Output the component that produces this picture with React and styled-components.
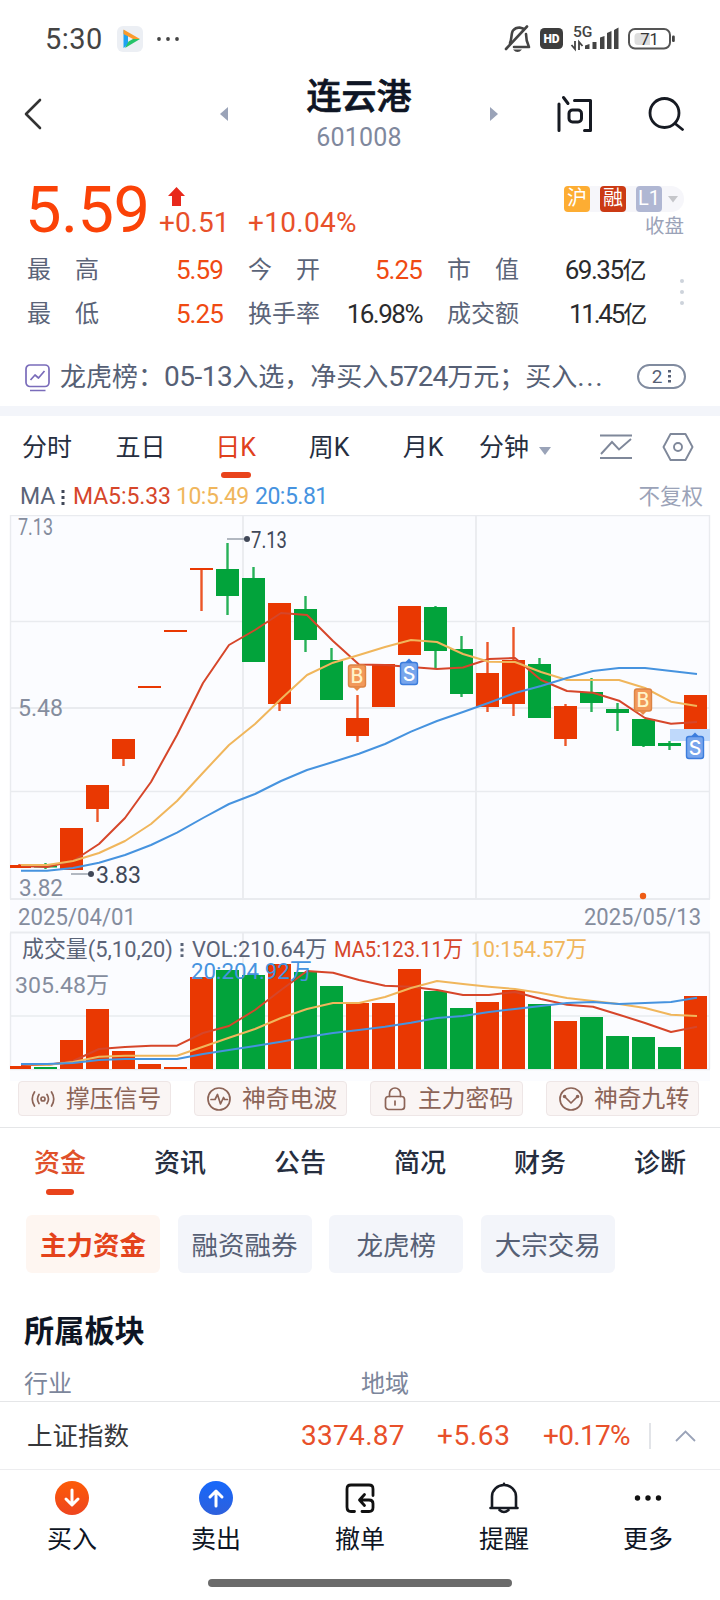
import styled, { createGlobalStyle, css } from 'styled-components'

const GlobalStyle = createGlobalStyle`
    body {
        margin: 0;
        background-color: #fff;
    }
    * {
        box-sizing: border-box;
    }
`

const RED = '#e93802'
const GREEN = '#02a33b'
const MA5 = '#d6462a'
const MA10 = '#f0b65c'
const MA20 = '#4693df'
const FONT = "Roboto, 'Noto Sans CJK SC', sans-serif"

const Page = styled.div`
    width: 720px;
    height: 1600px;
    overflow: hidden;
    display: flex;
    flex-direction: column;
    font-family: ${FONT};
    color: #262e3f;
    white-space: nowrap;
`

const Num = styled.span`
    font-size: ${(props) => props.$size || 28}px;
    letter-spacing: ${(props) => props.$gap || 0}px;
    color: ${(props) => props.$color || 'inherit'};
`

/* status bar */
const StatusBar = styled.header`
    height: 76px;
    padding: 2px 44px 0 45px;
    display: flex;
    align-items: center;
    justify-content: space-between;
    color: #444;
`

const StatusLeft = styled.div`
    display: flex;
    align-items: center;
    gap: 13px;
`

/* title bar */
const TitleBar = styled.div`
    height: 76px;
    margin-bottom: 16px;
    padding: 0 35px 0 24px;
    display: grid;
    grid-template-columns: 196px 8px 1fr 8px 59px 34px 57px 37px;
    grid-template-rows: 76px;
    align-items: center;
`

const StockName = styled.div`
    grid-column: 3;
    display: flex;
    flex-direction: column;
    align-items: center;
`

const Name = styled.h1`
    margin: 0 0 3px;
    font-size: 35px;
    line-height: 45px;
    font-weight: 500;
    -webkit-text-stroke: 0.7px #0e1524;
    color: #0e1524;
`

const Code = styled.span`
    font-size: 25px;
    line-height: 30px;
    letter-spacing: 0.2px;
    color: #7f889d;
`

/* quote */
const Quote = styled.section`
    height: 178px;
    padding: 12px 26px 0 27px;
`

const PriceRow = styled.div`
    height: 66px;
    display: flex;
    align-items: flex-end;
`

const Price = styled.div`
    width: 134px;
    margin-left: -2px;
    padding-bottom: 3px;
    font-size: 65px;
    line-height: 66px;
    letter-spacing: -0.6px;
    color: #fb4207;
`

const Change = styled.div`
    width: ${(props) => props.$w || 89}px;
    display: flex;
    flex-direction: column;
    padding-bottom: 7px;
    svg {
        margin: 0 0 0 9px;
    }
`

const Tags = styled.div`
    margin-left: auto;
    width: 130px;
    height: 66px;
    padding: 6px 10px 0 0;
    display: flex;
    flex-direction: column;
    align-items: flex-end;
`

const TagRow = styled.div`
    width: 120px;
    height: 26px;
    flex: none;
    display: flex;
    align-items: center;
    gap: 10px;
    border-radius: 5px 13px 13px 5px;
    background-color: #f6f6fa;
    svg {
        margin-left: -4px;
    }
`

const Tag = styled.span`
    width: 26px;
    height: 26px;
    border-radius: 4px;
    background-color: ${(props) => props.$bg};
    color: #fff;
    font-size: 20px;
    line-height: 25px;
    text-align: center;
`

const Closed = styled.span`
    font-size: 19.5px;
    line-height: 29px;
    color: #9ba3b8;
`

const Stats = styled.div`
    display: grid;
    grid-template-columns: 196px 25px 174px 25px 198px 1fr;
    grid-template-rows: 44px 44px;
    align-items: center;
    margin-top: 2px;
`

const Stat = styled.div`
    grid-column: ${(props) => props.$col};
    display: flex;
    justify-content: space-between;
    align-items: center;
    font-size: 24px;
    line-height: 44px;
    color: #5b6478;
`

const StatValue = styled.span`
    font-size: 26px;
    letter-spacing: ${(props) => props.$gap || -0.9}px;
    color: ${(props) => (props.$up ? '#f04a12' : '#2b2b2d')};
    small {
        font-size: 24px;
    }
`

const MoreStats = styled.div`
    grid-column: 6;
    grid-row: 1 / 3;
    justify-self: end;
    padding-right: 10px;
    display: flex;
    flex-direction: column;
    gap: 7px;
    i {
        width: 4px;
        height: 4px;
        border-radius: 50%;
        background-color: #cdd3db;
    }
`

/* notice line */
const Notice = styled.div`
    height: 60px;
    padding: 0 34px 0 25px;
    display: flex;
    align-items: center;
    color: #566075;
    font-size: 26px;
    svg {
        flex: none;
    }
`

const NoticeText = styled.div`
    margin-left: 10px;
    width: 577px;
    height: 38px;
    line-height: 40px;
`

const NoticeCount = styled.div`
    width: 49px;
    height: 25px;
    border: 2px solid #808b9f;
    border-radius: 13px;
    display: flex;
    align-items: center;
    justify-content: center;
    gap: 6px;
    font-size: 19px;
`

const Band = styled.div`
    height: 10px;
    background-color: #f3f5fa;
`

/* period tabs */
const Periods = styled.nav`
    height: 66px;
    display: grid;
    grid-template-columns: 94px 93px 97px 90px 98px 114px 60px 64px;
    align-items: start;
    font-size: 25px;
    line-height: 64px;
    color: #262e3f;
    svg {
        justify-self: center;
    }
`

const Period = styled.div`
    height: 66px;
    display: flex;
    flex-direction: column;
    align-items: center;
    ${(props) =>
        props.$active &&
        css`
            color: #e0411c;
            &::after {
                content: '';
                width: 30px;
                height: 6px;
                margin-top: -8px;
                border-radius: 3px;
                background-color: #e9431b;
            }
        `}
`

const Minutes = styled.div`
    display: flex;
    align-items: center;
    gap: 10px;
    padding-left: 7px;
    svg {
        margin-top: 5px;
    }
`

const Averages = styled.div`
    height: 26px;
    padding: 4px 17px 0 20px;
    display: flex;
    align-items: center;
    font-size: 23px;
    line-height: 22px;
    color: #5b6478;
`

const Average = styled.span`
    width: ${(props) => props.$w}px;
    color: ${(props) => props.$color};
    letter-spacing: ${(props) => props.$gap || 0}px;
`

const NoAdjust = styled.span`
    margin-left: auto;
    font-size: 21.5px;
    color: #9ba3b8;
`

const Chart = styled.svg`
    display: block;
    flex: none;
    font-family: ${FONT};
`

/* signal buttons */
const Signals = styled.div`
    height: 47px;
    padding: 0 21px 0 18px;
    display: flex;
    justify-content: space-between;
    border-bottom: 1px solid #e5e6e8;
`

const Signal = styled.button`
    width: 153px;
    height: 35px;
    padding: 0 0 0 12px;
    border: 1px solid #eee6e6;
    border-radius: 4px;
    background-color: #faf5f4;
    color: #8c6457;
    display: flex;
    align-items: center;
    gap: 11px;
    font-family: ${FONT};
    font-size: 23.8px;
    line-height: 30px;
`

/* info tabs */
const InfoTabs = styled.nav`
    height: 87px;
    display: grid;
    grid-template-columns: repeat(6, 120px);
    font-size: 26px;
    font-weight: 500;
    line-height: 70px;
`

const InfoTab = styled.div`
    display: flex;
    flex-direction: column;
    align-items: center;
    ${(props) =>
        props.$active &&
        css`
            color: #e0502a;
            &::after {
                content: '';
                width: 28px;
                height: 6px;
                margin-top: -9px;
                border-radius: 3px;
                background-color: #e9431b;
            }
        `}
`

const Chips = styled.div`
    display: flex;
    gap: 17.6px;
    padding-left: 26px;
`

const Chip = styled.div`
    width: 134px;
    height: 58px;
    border-radius: 6px;
    background-color: ${(props) => (props.$active ? '#fef6f1' : '#f3f5fa')};
    color: ${(props) => (props.$active ? '#e4431b' : '#566075')};
    font-size: 26.5px;
    font-weight: ${(props) => (props.$active ? 700 : 400)};
    line-height: 62px;
    text-align: center;
`

const SectorTitle = styled.h2`
    margin: 37px 0 0 24px;
    font-size: 30.2px;
    line-height: 44px;
    height: 44px;
    font-weight: 700;
    color: #0e1524;
`

const SectorHeads = styled.div`
    height: 48px;
    padding: 10px 24px 0;
    display: grid;
    grid-template-columns: 337px 1fr;
    font-size: 24px;
    line-height: 40px;
    color: #7c869b;
    border-bottom: 1px solid #e5e6e8;
`

const IndexRow = styled.div`
    height: 68px;
    padding: 0 24px 0 27px;
    display: grid;
    grid-template-columns: 274px 136px 106px 106px 26px 1fr;
    align-items: center;
    font-size: 25.5px;
    line-height: 64px;
    color: #36373a;
    border-bottom: 1px solid #ededef;
`

const Split = styled.i`
    width: 2px;
    height: 26px;
    background-color: #e2e4e8;
`

const BottomBar = styled.nav`
    height: 109px;
    display: grid;
    grid-template-columns: repeat(5, 1fr);
`

const Action = styled.div`
    display: flex;
    flex-direction: column;
    align-items: center;
    padding-top: 11px;
    font-size: 25px;
    line-height: 50px;
    color: #0e1524;
`

const HomeBar = styled.div`
    width: 304px;
    height: 8px;
    border-radius: 4px;
    margin: 0 auto;
    background-color: #6b6b6b;
`

/* x of the candle in slot i; slots are 26px apart */
const slot = (i) => 8 + i * 26

/* [up, high, bodyTop, bodyBottom, low] */
const candles = [
    [1, 864, 865, 868, 868],
    [0, 863, 865.5, 867.5, 869],
    [1, 828, 828, 870, 870],
    [1, 785, 785, 809, 822],
    [1, 739, 739, 759, 766],
    [1, 686, 686, 688, 688],
    [1, 630, 630, 632, 632],
    [1, 568, 568, 570, 611],
    [0, 543, 569, 596, 615],
    [0, 567, 578, 662, 662],
    [1, 603, 603, 704, 711],
    [0, 596, 609, 640, 652],
    [0, 648, 660, 700, 700],
    [1, 695, 718, 736, 742],
    [1, 664, 664, 707, 707],
    [1, 606, 606, 655, 655],
    [0, 606, 607, 651, 668],
    [0, 636, 649, 694, 697],
    [1, 642, 673, 707, 712],
    [1, 627, 660, 704, 716],
    [0, 658, 664, 718, 718],
    [1, 704, 706, 739, 746],
    [0, 678, 692, 703, 712],
    [0, 703, 709, 713, 731],
    [0, 719, 719, 746, 747],
    [0, 741, 743, 746, 750],
    [1, 695, 695, 729, 729],
]

const volumes = [1066, 1067, 1040, 1009, 1051, 1064, 1067, 977, 970, 975, 964, 972, 986, 1003, 1003, 969, 991, 1008, 1002, 990, 1004, 1021, 1017, 1036, 1037, 1047, 996]

const priceLines = [
    [MA5, [866, 867, 861, 844, 818, 782, 735, 683, 645, 630, 613, 615, 641, 664.5, 665, 667, 669, 667.5, 659, 658, 680, 691, 692.7, 700.7, 718, 723.7, 722]],
    [MA10, [865, 865, 861, 853, 841, 824, 801, 772.7, 745, 724, 699, 675, 662.7, 655, 647, 640, 642, 654, 661.7, 662, 672, 680, 680, 680, 688, 701.7, 706]],
    [MA20, [870.7, 870.7, 868, 862.7, 855, 845, 832.7, 818, 804, 794, 781, 770, 762, 753.7, 744, 731.7, 721, 712, 702.7, 693, 686, 678, 671, 668, 668, 671, 674]],
]

const volumeLines = [
    [MA5, [1065, 1065, 1061, 1049, 1047, 1045.7, 1045.7, 1033, 1026, 1010, 990, 971, 972.7, 980, 985.7, 986.7, 990, 995, 995, 992, 999, 1004.7, 1006.7, 1014.7, 1023, 1032, 1026.7]],
    [MA10, [1064, 1065, 1062, 1056.7, 1055.7, 1055.7, 1055.7, 1046.7, 1037.7, 1029, 1018, 1009, 1003, 1003, 997, 988, 981, 984, 986.7, 989, 993, 998, 1001, 1004, 1008, 1014.7, 1016]],
    [MA20, [1064, 1064, 1063, 1060, 1059, 1059, 1059, 1054, 1050, 1046, 1041.7, 1037, 1033, 1030, 1026.7, 1022.7, 1018, 1016, 1012, 1009, 1006, 1003, 1002, 1004, 1003, 1002, 997.7]],
]

function Candle({ i, data }) {
    const [up, high, top, bottom, low] = data
    const color = up ? RED : GREEN
    const x = i === 0 ? 10 : slot(i)
    return (
        <g fill={color}>
            <rect x={slot(i) + 10.3} y={high} width="2.4" height={low - high} opacity="0.85" />
            <rect x={x} y={top} width={slot(i) + 23 - x} height={bottom - top} />
        </g>
    )
}

function Line({ color, ys }) {
    return <polyline points={ys.map((y, i) => `${21 + i * 26},${y}`).join(' ')} fill="none" stroke={color} strokeWidth="2" strokeLinejoin="round" />
}

function Label({ x, y, w, size = 23, color = '#858d9e', children }) {
    return <text x={x} y={y} fontSize={size} fill={color} textLength={w} lengthAdjust="spacingAndGlyphs">{children}</text>
}

/* B badge points down at the candle, S badge points up */
function Badge({ x, y, kind }) {
    const buy = kind === 'B'
    return (
        <g>
            <rect x={x - 8.5} y={y - 11} width="17" height="22" rx="2.5" fill={buy ? '#f2995a' : '#77a5ec'} stroke={buy ? '#dc8444' : '#3c7ddd'} strokeWidth="1.4" />
            <path d={buy ? `M${x - 4} ${y + 11}h8l-4 4z` : `M${x - 4} ${y - 11}h8l-4 -4z`} fill={buy ? '#e98b48' : '#3c7ddd'} />
            <text x={x} y={y + 7} fontSize="19.5" fontWeight="500" textAnchor="middle" fontFamily="Inter, sans-serif" fill={buy ? '#fff3c9' : '#fff'}>{kind}</text>
        </g>
    )
}

function StockChart() {
    return (
        <Chart width="720" height="573" viewBox="0 508 720 573">
            <rect x="10" y="515" width="700" height="566" fill="#fbfcff" />
            <g stroke="#e9ebef" strokeWidth="1.4" fill="none">
                <path d="M10 515.6H710M10 621.5H710M10 791.5H710M10 1016H710M10 1069.5H710" />
                <path d="M10 708H710M10 899H710M10 932.6H710" strokeWidth="2" />
                <path d="M10.5 515V899M709.5 515V899M10.5 933V1069M709.5 933V1069" />
                <path d="M243 515V899M476 515V899M243 933V1069M476 933V1069" strokeWidth="1.8" />
            </g>
            <rect x="670" y="729" width="40" height="12" fill="#bfd9fb" />
            {candles.map((c, i) => <Candle key={i} i={i} data={c} />)}
            {priceLines.map(([color, ys]) => <Line key={color} color={color} ys={ys} />)}
            <Badge x={357} y={676} kind="B" />
            <Badge x={409} y={673.5} kind="S" />
            <Badge x={643} y={700} kind="B" />
            <Badge x={695} y={747.5} kind="S" />

            <Label x={18} y={534.5} w={35}>7.13</Label>
            <Label x={18} y={716} w={45}>5.48</Label>
            <Label x={19} y={896} w={44}>3.82</Label>
            <path d="M227 539H246M71 874H90" stroke="#9ba1ad" strokeWidth="1.6" />
            <circle cx="247" cy="539" r="3" fill="#414858" />
            <circle cx="91" cy="874" r="3" fill="#414858" />
            <Label x={251} y={548} w={36} color="#414858">7.13</Label>
            <Label x={96} y={883} w={45} color="#414858">3.83</Label>
            <circle cx="643" cy="896" r="3.2" fill="#ee5c15" />
            <Label x={18} y={925} w={118}>2025/04/01</Label>
            <Label x={584} y={925} w={117}>2025/05/13</Label>

            {volumes.map((top, i) => {
                const x = i === 0 ? 10 : slot(i)
                return <rect key={i} x={x} y={top} width={slot(i) + 23 - x} height={1069 - top} fill={candles[i][0] ? RED : GREEN} />
            })}
            {volumeLines.map(([color, ys]) => <Line key={color} color={color} ys={ys} />)}
            <Label x={22} y={957} w={151} size={22.5} color="#5b6478">成交量(5,10,20)</Label>
            <path d="M182 943V957" stroke="#5b6478" strokeWidth="3" strokeDasharray="3 2.6" />
            <Label x={192} y={957} w={135} size={22.5} color="#5b6478">VOL:210.64万</Label>
            <Label x={334} y={957} w={129} size={22.5} color={MA5}>MA5:123.11万</Label>
            <Label x={471} y={957} w={116} size={22.5} color={MA10}>10:154.57万</Label>
            <Label x={191} y={979} w={121} size={22.5} color={MA20}>20:204.92万</Label>
            <Label x={15} y={993} w={94} size={22.5}>305.48万</Label>
        </Chart>
    )
}

function StatusIcons() {
    return (
        <svg width="172" height="30" viewBox="504 24 172 30">
            <g fill="none" stroke="#444" strokeWidth="2.6" strokeLinecap="round" strokeLinejoin="round">
                <path d="M510 43C512 39 511 33 513 30.500C515 28 517 27.500 519.500 27.500L523 28.500M526 34C526 40 527 43 529 47H514" />
                <path d="M506 49L527 26.500" />
            </g>
            <path d="M513 49.500h9q-4.500 5 -9 0z" fill="#444" />
            <rect x="540" y="28" width="23" height="21" rx="4.500" fill="#3d3d3d" />
            <text x="551.500" y="43" fontSize="12" fontWeight="900" textAnchor="middle" fill="#fff" fontFamily={FONT}>HD</text>
            <text x="573" y="37" fontSize="14" fontWeight="500" fill="#444" textLength="19.500" lengthAdjust="spacingAndGlyphs" fontFamily={FONT}>5G</text>
            <path d="M575 41v8l-3.500 -4M579 50v-8l3.500 4" fill="none" stroke="#444" strokeWidth="1.800" />
            <path d="M585 49v-3.500l4.500 -1.500v5zM592.500 49v-7h4v7zM600 49V37.500l4.500 -1.500V49zM607 49V33l4.500 -2V49zM614 49V30l4.500 -2.500V49z" fill="#444" />
            <rect x="629" y="29" width="41" height="19.500" rx="6" fill="#fff" stroke="#555" strokeWidth="2" />
            <path d="M638 33h12v12h-12q-3.500 0 -3.500 -3.500v-5q0 -3.500 3.500 -3.500z" fill="#dedede" />
            <text x="649.500" y="44.500" fontSize="16.500" textAnchor="middle" fill="#333" fontFamily={FONT}>71</text>
            <rect x="672" y="35.500" width="2.800" height="6.500" rx="1.200" fill="#444" />
        </svg>
    )
}

const signals = [
    ['撑压信号', <><circle cx="12" cy="12" r="2" /><path d="M8 7.500q-3 4.500 0 9M16 7.500q3 4.500 0 9M3.500 5q-4.500 7 0 14M20.500 5q4.500 7 0 14" /></>],
    ['神奇电波', <><circle cx="12" cy="12" r="11" /><path d="M4 12.500h4l2.500 -5 3 9.500 3 -6.500 1 2h3" /></>],
    ['主力密码', <><rect x="2.500" y="9.500" width="19" height="13" rx="3" /><path d="M6.500 9.500V6.500a5.500 5.500 0 0 1 11 0v3M12 14v4" /></>],
    ['神奇九转', <><circle cx="12" cy="12" r="11" /><path d="M5.500 9.500l6.500 6.500 6.500 -6.500" /><path d="M5.500 9.500h.1M18.500 9.500h.1" strokeWidth="3.500" /></>],
]

const actions = [
    ['买入', <><defs><linearGradient id="buy" x1="0" y1="0" x2="0" y2="1"><stop offset="0" stopColor="#fd5b06" /><stop offset="1" stopColor="#ee451f" /></linearGradient></defs><circle cx="17" cy="17" r="17" fill="url(#buy)" /><path d="M17 9v14.500M11 18l6 6 6 -6" stroke="#fff" /></>],
    ['卖出', <><defs><linearGradient id="sell" x1="0" y1="0" x2="0" y2="1"><stop offset="0" stopColor="#1668fb" /><stop offset="1" stopColor="#2e60dc" /></linearGradient></defs><circle cx="17" cy="17" r="17" fill="url(#sell)" /><path d="M17 25V10.500M11 16l6 -6 6 6" stroke="#fff" /></>],
    ['撤单', <path d="M30 14.500V8q0 -4 -4 -4H8q-4 0 -4 4v18q0 4.500 4 4.500h3.500M19 30.500h7q4 0 4 -4v-4q0 -3.500 -4 -3.500H17M21.500 13.500L16.500 19l5 5.500" stroke="#111" strokeWidth="2.800" />],
    ['提醒', <><path d="M17 2.800v1M5 27V15.500a12 11.500 0 0 1 24 0V27M3.500 27h27" stroke="#161a22" strokeWidth="2.600" /><path d="M12.500 29q4.500 4 9 0" stroke="#161a22" strokeWidth="2.600" /></>],
    ['更多', <><circle cx="6.500" cy="17" r="2.700" fill="#111" /><circle cx="17" cy="17" r="2.700" fill="#111" /><circle cx="27.500" cy="17" r="2.700" fill="#111" /></>],
]

function App() {
    return (
        <Page>
            <GlobalStyle />
            <StatusBar>
                <StatusLeft>
                    <Num $size={29} $gap={0.5}>5:30</Num>
                    <svg width="64" height="28" viewBox="0 0 64 28">
                        <rect x="1" y="1" width="26" height="26" rx="6" fill="#eceff4" />
                        <path d="M7.500 5v18l4.500 -3V9z" fill="#1fa3f2" />
                        <path d="M7.500 4.500l16.500 9.500h-7L7.500 9z" fill="#fb9a2c" />
                        <path d="M24 14L9 23l3.500 -6.500L17 14z" fill="#25c46a" />
                        <circle cx="43" cy="14" r="1.900" fill="#444" />
                        <circle cx="52" cy="14" r="1.900" fill="#444" />
                        <circle cx="61" cy="14" r="1.900" fill="#444" />
                    </svg>
                </StatusLeft>
                <StatusIcons />
            </StatusBar>

            <TitleBar>
                <svg width="18" height="32" viewBox="0 0 18 32">
                    <path d="M16 2L2 16l14 14" fill="none" stroke="#333" strokeWidth="2.600" strokeLinecap="round" strokeLinejoin="round" />
                </svg>
                <svg width="8" height="14"><path d="M8 0v14L0 7z" fill="#9aa3b8" /></svg>
                <StockName>
                    <Name>连云港</Name>
                    <Code>601008</Code>
                </StockName>
                <svg width="8" height="14"><path d="M0 0v14l8 -7z" fill="#9aa3b8" /></svg>
                <span />
                <svg width="36" height="38" viewBox="0 0 36 38">
                    <path d="M2 9v26.500M6.500 2.500L11 8.500M17.500 5.500H33.500V35.500H27.500" fill="none" stroke="#161a22" strokeWidth="3" strokeLinecap="round" strokeLinejoin="round" />
                    <rect x="12" y="15" width="12.500" height="12" rx="3.500" fill="none" stroke="#161a22" strokeWidth="3" />
                </svg>
                <span />
                <svg width="37" height="34" viewBox="0 0 37 34">
                    <circle cx="16.500" cy="16" r="14.500" fill="none" stroke="#161a22" strokeWidth="2.800" />
                    <path d="M27 26.500l7.500 6" stroke="#161a22" strokeWidth="2.800" strokeLinecap="round" />
                </svg>
            </TitleBar>

            <Quote>
                <PriceRow>
                    <Price>5.59</Price>
                    <Change>
                        <svg width="17" height="19" viewBox="0 0 17 19"><path d="M8.500 0L17 9h-4v10H4V9H0z" fill="#e8291c" /></svg>
                        <Num $color="#e8502a">+0.51</Num>
                    </Change>
                    <Change $w={120}>
                        <Num $color="#e8502a" $gap={0.3}>+10.04%</Num>
                    </Change>
                    <Tags>
                        <TagRow>
                            <Tag $bg="#fdad33">沪</Tag>
                            <Tag $bg="#cb3a14">融</Tag>
                            <Tag $bg="#b0b7d3">L1</Tag>
                            <svg width="10" height="7"><path d="M0 0h10L5 6.500z" fill="#c5c6ca" /></svg>
                        </TagRow>
                        <Closed>收盘</Closed>
                    </Tags>
                </PriceRow>
                <Stats>
                    <Stat $col={1}>最　高<StatValue $up>5.59</StatValue></Stat>
                    <Stat $col={3}>今　开<StatValue $up>5.25</StatValue></Stat>
                    <Stat $col={5}>市　值<StatValue $gap={-1.5}>69.35<small>亿</small></StatValue></Stat>
                    <Stat $col={1}>最　低<StatValue $up>5.25</StatValue></Stat>
                    <Stat $col={3}>换手率<StatValue $gap={-1.5}>16.98%</StatValue></Stat>
                    <Stat $col={5}>成交额<StatValue $gap={-2.2}>11.45<small>亿</small></StatValue></Stat>
                    <MoreStats><i /><i /><i /></MoreStats>
                </Stats>
            </Quote>

            <Notice>
                <svg width="25" height="31" viewBox="0 -3 25 31">
                    <g fill="none" stroke="#7a6cba" strokeWidth="1.700" strokeLinejoin="round">
                        <rect x="1" y="1" width="23" height="21.500" rx="4" />
                        <path d="M5.500 16l4.500 -5 3.500 3 6 -7M5 26.500h15.500" />
                    </g>
                </svg>
                <NoticeText>龙虎榜：<Num $size={28} $gap={-0.5}>05-13</Num>入选，净买入<Num $size={28} $gap={-1}>5724</Num>万元；买入<Num $size={28} $gap={1.6}>...</Num></NoticeText>
                <NoticeCount>
                    2
                    <svg width="3" height="13"><path d="M1.500 0V13" stroke="#566075" strokeWidth="3" strokeDasharray="2.600 2.400" /></svg>
                </NoticeCount>
            </Notice>
            <Band />

            <Periods>
                <Period>分时</Period>
                <Period>五日</Period>
                <Period $active>日K</Period>
                <Period>周K</Period>
                <Period>月K</Period>
                <Minutes>
                    分钟
                    <svg width="12" height="8"><path d="M0 0h12L6 8z" fill="#9aa3b8" /></svg>
                </Minutes>
                <svg width="32" height="64" viewBox="0 0 32 64">
                    <path d="M0 19.500h32M0 42h32M1 38l11 -12 7 7.500L31 23" fill="none" stroke="#7f889a" strokeWidth="1.900" />
                </svg>
                <svg width="32" height="64" viewBox="0 0 32 64">
                    <path d="M8.500 18h15l7 13 -7 13h-15l-7 -13z" fill="none" stroke="#7f889a" strokeWidth="1.900" strokeLinejoin="round" />
                    <circle cx="16" cy="31" r="4" fill="none" stroke="#7f889a" strokeWidth="1.900" />
                </svg>
            </Periods>
            <Averages>
                <Average $w={41}>MA</Average>
                <svg width="12" height="15"><path d="M2 0V15" stroke="#414858" strokeWidth="3" strokeDasharray="3 3" /></svg>
                <Average $w={103} $color={MA5} $gap={-0.1}>MA5:5.33</Average>
                <Average $w={79} $color={MA10} $gap={-0.5}>10:5.49</Average>
                <Average $w={80} $color={MA20} $gap={-0.5}>20:5.81</Average>
                <NoAdjust>不复权</NoAdjust>
            </Averages>
            <StockChart />

            <Signals>
                {signals.map(([text, icon]) => (
                    <Signal key={text}>
                        <svg width="24" height="24" viewBox="0 0 24 24" fill="none" stroke="#8c6457" strokeWidth="1.700" strokeLinecap="round" strokeLinejoin="round">{icon}</svg>
                        {text}
                    </Signal>
                ))}
            </Signals>

            <InfoTabs>
                {['资金', '资讯', '公告', '简况', '财务', '诊断'].map((t, i) => (
                    <InfoTab key={t} $active={i === 0}>{t}</InfoTab>
                ))}
            </InfoTabs>
            <Chips>
                {['主力资金', '融资融券', '龙虎榜', '大宗交易'].map((t, i) => (
                    <Chip key={t} $active={i === 0}>{t}</Chip>
                ))}
            </Chips>
            <SectorTitle>所属板块</SectorTitle>
            <SectorHeads>
                <span>行业</span>
                <span>地域</span>
            </SectorHeads>

            <IndexRow>
                <span>上证指数</span>
                <Num $color="#e8502a" $gap={0.3}>3374.87</Num>
                <Num $color="#e8502a" $gap={0.6}>+5.63</Num>
                <Num $color="#e8502a" $gap={-0.7}>+0.17%</Num>
                <Split />
                <svg width="21" height="12" viewBox="0 0 21 12"><path d="M1 11L10.500 1.500 20 11" fill="none" stroke="#9aa3b8" strokeWidth="1.800" /></svg>
            </IndexRow>
            <BottomBar>
                {actions.map(([text, icon]) => (
                    <Action key={text}>
                        <svg width="34" height="34" viewBox="0 0 34 34" fill="none" strokeWidth="3" strokeLinecap="round" strokeLinejoin="round">{icon}</svg>
                        {text}
                    </Action>
                ))}
            </BottomBar>
            <HomeBar />
        </Page>
    )
}

export default App
